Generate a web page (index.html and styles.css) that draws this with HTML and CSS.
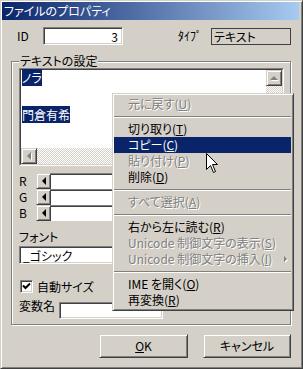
FILE: index.html
```html
<!DOCTYPE html>
<html lang="ja">
<head>
    <meta charset="UTF-8">
    <title>ファイルのプロパティ</title>
    <link rel="stylesheet" href="styles.css">
</head>

<body>
    <div class="window">
        <div class="titlebar">ファイルのプロパティ</div>
        <div class="dialog">
            <div class="row-top">
                <span class="lbl-id">ID</span>
                <div class="field field-id">3</div>
                <span class="lbl-type">ﾀｲﾌﾟ</span>
                <div class="static">テキスト</div>
            </div>
            <fieldset class="group">
                <legend>テキストの設定</legend>
                <div class="memo">
                    <div class="memo-inner">
                        <div class="memo-text"><span class="sel">ノラ</span><br><br><br><span class="sel">門倉有希</span></div>
                        <div class="vscroll">
                            <div class="sbtn"><i class="arr-up off"></i></div>
                            <div class="track"></div>
                        </div>
                        <div class="hscroll">
                            <div class="sbtn"><i class="arr-left off"></i></div>
                            <div class="track"></div>
                        </div>
                        <div class="corner"></div>
                    </div>
                </div>
                <div class="sliders">
                    <div class="slider"><span class="slider-lbl">R</span><div class="sbtn"><i class="arr-left"></i></div><div class="slider-track"></div></div>
                    <div class="slider"><span class="slider-lbl">G</span><div class="sbtn"><i class="arr-left"></i></div><div class="slider-track"></div></div>
                    <div class="slider"><span class="slider-lbl">B</span><div class="sbtn"><i class="arr-left"></i></div><div class="slider-track"></div></div>
                </div>
                <div class="lbl-font">フォント</div>
                <div class="field field-font">_ゴシック</div>
                <div class="check">
                    <span class="box"><svg width="9" height="9" viewBox="0 0 9 9"><path d="M1 3.5 L3.5 6 L8 1.5" fill="none" stroke="#000" stroke-width="2"/></svg></span>
                    <span>自動サイズ</span>
                </div>
                <div class="row-var">
                    <span class="lbl-var">変数名</span>
                    <div class="field field-var"></div>
                </div>
            </fieldset>
            <div class="buttons">
                <button class="btn btn-ok"><u>O</u>K</button>
                <button class="btn btn-cancel">キャンセル</button>
            </div>
        </div>

        <!-- right-click menu over the dialog -->
        <div class="menu">
            <div class="item off">元に戻す(<u>U</u>)</div>
            <div class="sep"></div>
            <div class="item">切り取り(<u>T</u>)</div>
            <div class="item hot">コピー(<u>C</u>)</div>
            <div class="item off">貼り付け(<u>P</u>)</div>
            <div class="item">削除(<u>D</u>)</div>
            <div class="sep"></div>
            <div class="item off">すべて選択(<u>A</u>)</div>
            <div class="sep"></div>
            <div class="item">右から左に読む(<u>R</u>)</div>
            <div class="item off">Unicode 制御文字の表示(<u>S</u>)</div>
            <div class="item off sub">Unicode 制御文字の挿入(<u>I</u>)</div>
            <div class="sep"></div>
            <div class="item">IME を開く(<u>O</u>)</div>
            <div class="item">再変換(<u>R</u>)</div>
        </div>
        <svg class="cursor" width="13" height="21" viewBox="0 0 13 21"><path d="M0.5 0.5 V16.5 L4.5 12.5 L7.5 19.5 L9.5 18.5 L6.5 11.5 H11.5 Z" fill="#fff" stroke="#000"/></svg>
    </div>
</body>

</html>
```

FILE: styles.css
```css
body {
    margin: 0;
    background: #d4d0c8;
    font-family: "Noto Sans CJK JP", "Noto Sans", sans-serif;
    font-size: 12px;
    line-height: 12px;
    /* Proportional kana, closer to MS UI Gothic. */
    font-feature-settings: "palt";
    color: #000;
}

.window {
    position: relative;
    width: 303px;
    height: 369px;
    box-sizing: border-box;
    background: #d4d0c8;
    border: 1px solid;
    border-color: #d4d0c8 #404040 #404040 #d4d0c8;
    box-shadow: inset 1px 1px #fff, inset -1px -1px #808080;
    padding: 1px 3px 3px 1px;
    overflow: hidden;
}

.titlebar {
    height: 18px;
    line-height: 18px;
    padding-left: 2px;
    color: #fff;
    background: linear-gradient(to right, #0a246a, #a6caf0);
    white-space: nowrap;
}

/* Sunken edit box. */
.field {
    box-sizing: border-box;
    background: #fff;
    border: 1px solid;
    border-color: #808080 #fff #fff #808080;
    box-shadow: inset 1px 1px #404040, inset -1px -1px #d4d0c8;
}

/* Raised scroll / push button. */
.sbtn,
.btn {
    box-sizing: border-box;
    background: #d4d0c8;
    border: 1px solid;
    border-color: #d4d0c8 #404040 #404040 #d4d0c8;
    box-shadow: inset 1px 1px #fff, inset -1px -1px #808080;
    display: flex;
    align-items: center;
    justify-content: center;
}

.row-top {
    display: flex;
    align-items: flex-start;
    margin-top: 7px;
    height: 18px;
}

.lbl-id {
    margin: 3px 0 0 15px;
    width: 26px;
}

.field-id {
    width: 80px;
    height: 18px;
    padding: 3px 4px 0 0;
    text-align: right;
}

.lbl-type {
    margin: 3px 0 0 55px;
    width: 33px;
}

.static {
    margin-top: 1px;
    width: 80px;
    height: 17px;
    box-sizing: border-box;
    border: 1px solid #404040;
    padding: 2px 0 0 2px;
}

.group {
    margin: 10px 0 0 9px;
    width: 280px;
    height: 270px;
    box-sizing: border-box;
    border: 1px solid #808080;
    box-shadow: inset 1px 1px #fff, 1px 1px #fff;
    padding: 1px 0 0 7px;
    min-width: 0;
}

.group legend {
    padding: 0 1px;
    background: #d4d0c8;
    line-height: 12px;
}

.memo {
    width: 265px;
    height: 98px;
    box-sizing: border-box;
    border: 1px solid;
    border-color: #808080 #fff #fff #808080;
}

.memo-inner {
    height: 100%;
    box-sizing: border-box;
    border: 1px solid;
    border-color: #404040 #d4d0c8 #d4d0c8 #404040;
    display: grid;
    grid-template-columns: 1fr 16px;
    grid-template-rows: 1fr 16px;
}

.memo-text {
    background: #fff;
    padding: 2px 1px;
    line-height: 12.33px;
}

.sel {
    background: #0a246a;
    color: #fff;
}

.vscroll {
    display: flex;
    flex-direction: column;
}

.vscroll .sbtn {
    height: 16px;
}

.hscroll {
    display: flex;
}

.hscroll .sbtn {
    width: 16px;
}

.track {
    flex: 1;
    /* Dithered scrollbar track. */
    background: repeating-conic-gradient(#fff 0 25%, #d4d0c8 0 50%) 0 0 / 2px 2px;
}

.corner {
    background: #d4d0c8;
}

.arr-up,
.arr-left {
    width: 0;
    height: 0;
}

.arr-up {
    border-left: 4px solid transparent;
    border-right: 4px solid transparent;
    border-bottom: 4px solid #000;
}

.arr-left {
    border-top: 4px solid transparent;
    border-bottom: 4px solid transparent;
    border-right: 4px solid #000;
}

.arr-up.off {
    border-bottom-color: #808080;
    filter: drop-shadow(1px 1px #fff);
}

.arr-left.off {
    border-right-color: #808080;
    filter: drop-shadow(1px 1px #fff);
}

.sliders {
    margin-top: 7px;
    width: 230px;
}

.slider {
    display: flex;
    height: 16px;
}

.slider-lbl {
    width: 17px;
    padding-top: 2px;
}

.slider .sbtn {
    width: 15px;
}

.slider-track {
    flex: 1;
    background: #fff;
    border-top: 1px solid #808080;
    box-shadow: inset 0 1px #404040;
}

.lbl-font {
    margin-top: 10px;
}

.field-font {
    margin-top: 3px;
    width: 230px;
    height: 18px;
    padding: 3px 0 0 3px;
}

.check {
    display: flex;
    align-items: center;
    gap: 4px;
    margin: 16px 0 0 1px;
    height: 13px;
}

.box {
    width: 13px;
    height: 13px;
    box-sizing: border-box;
    background: #fff;
    border: 1px solid;
    border-color: #808080 #fff #fff #808080;
    box-shadow: inset 1px 1px #404040, inset -1px -1px #d4d0c8;
    display: flex;
    align-items: center;
    justify-content: center;
}

.box svg {
    display: block;
}

.row-var {
    display: flex;
    align-items: flex-start;
    margin-top: 7px;
}

.lbl-var {
    width: 40px;
}

.field-var {
    margin-top: 2px;
    width: 104px;
    height: 17px;
}

.buttons {
    display: flex;
    justify-content: flex-end;
    gap: 15px;
    margin: 9px 0 0 9px;
    width: 280px;
}

.btn {
    height: 24px;
    font: inherit;
    color: #000;
    padding: 0;
}

.btn-ok {
    width: 89px;
}

.btn-cancel {
    width: 88px;
}

.menu {
    position: absolute;
    left: 111px;
    top: 92px;
    width: 182px;
    box-sizing: border-box;
    background: #d4d0c8;
    border: 1px solid;
    border-color: #d4d0c8 #404040 #404040 #d4d0c8;
    box-shadow: inset 1px 1px #fff, inset -1px -1px #808080;
    padding: 2px 2px 2px 1px;
}

.item {
    position: relative;
    height: 16px;
    line-height: 16px;
    padding-left: 14px;
    white-space: nowrap;
}

.item.off {
    color: #808080;
    text-shadow: 1px 1px #fff;
}

.item.hot {
    background: #0a246a;
    color: #fff;
}

.item.sub::after {
    content: "";
    position: absolute;
    right: 4px;
    top: 5px;
    border-top: 3px solid transparent;
    border-bottom: 3px solid transparent;
    border-left: 3px solid #808080;
    filter: drop-shadow(1px 1px #fff);
}

.sep {
    height: 9px;
    display: flex;
    flex-direction: column;
    justify-content: center;
}

.sep::before {
    content: "";
    height: 1px;
    background: #808080;
    border-bottom: 1px solid #fff;
}

.cursor {
    position: absolute;
    left: 205px;
    top: 152px;
}
```
